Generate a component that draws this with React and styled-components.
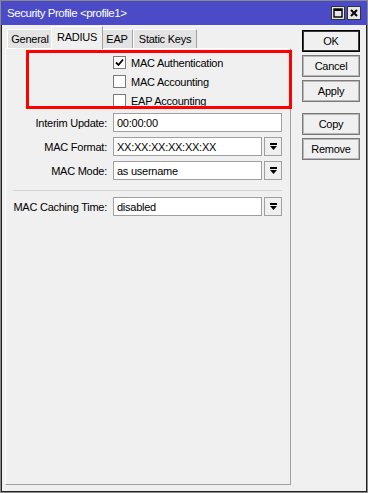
import React from "react";
import styled, { createGlobalStyle } from "styled-components";

const GlobalStyle = createGlobalStyle`
  html, body {
    margin: 0;
    padding: 0;
    background: #f0f0f0;
  }
  body {
    font-family: "Liberation Sans", Arial, sans-serif;
    font-size: 11px;
    letter-spacing: -0.25px;
    color: #000;
  }
  * {
    box-sizing: border-box;
  }
`;

const tabs = [
  { name: "General", width: 46 },
  { name: "RADIUS", width: 52 },
  { name: "EAP", width: 32 },
  { name: "Static Keys", width: 64 },
];

const checks = [
  { label: "MAC Authentication", checked: true },
  { label: "MAC Accounting", checked: false },
  { label: "EAP Accounting", checked: false },
];

function App() {
  return (
    <>
      <GlobalStyle />
      <Window>
        <TitleBar>
          <Title>Security Profile &lt;profile1&gt;</Title>
          <TitleButtons>
            <TitleButton>
              <svg width="10" height="10" viewBox="0 0 10 10">
                <rect x="1" y="1" width="8" height="8" fill="none" stroke="#000" strokeWidth="1.4" />
                <rect x="1" y="1" width="8" height="2" fill="#000" />
              </svg>
            </TitleButton>
            <TitleButton>
              <svg width="10" height="10" viewBox="0 0 10 10">
                <path d="M2 2 L8 8 M8 2 L2 8" stroke="#000" strokeWidth="2" />
              </svg>
            </TitleButton>
          </TitleButtons>
        </TitleBar>

        <Body>
          <TabArea>
            <TabStrip>
              {tabs.map((t) => (
                <Tab key={t.name} $w={t.width} $active={t.name === "RADIUS"}>
                  {t.name}
                </Tab>
              ))}
            </TabStrip>

            <Panel>
              <Highlight />
              <Form>
                {checks.map((c) => (
                  <CheckRow key={c.label}>
                    <CheckBox>
                      {c.checked && (
                        <svg width="9" height="9" viewBox="0 0 9 9">
                          <path d="M1 4.5 L3.5 7 L8 1.5" fill="none" stroke="#000" strokeWidth="1.8" />
                        </svg>
                      )}
                    </CheckBox>
                    <span>{c.label}</span>
                  </CheckRow>
                ))}

                <Label $first>Interim Update:</Label>
                <Control $first>
                  <Input>00:00:00</Input>
                </Control>

                <Label>MAC Format:</Label>
                <Control>
                  <Input>XX:XX:XX:XX:XX:XX</Input>
                  <DropButton>
                    <DropIcon />
                  </DropButton>
                </Control>

                <Label>MAC Mode:</Label>
                <Control>
                  <Input>as username</Input>
                  <DropButton>
                    <DropIcon />
                  </DropButton>
                </Control>

                <Separator />

                <Label>MAC Caching Time:</Label>
                <Control>
                  <Input>disabled</Input>
                  <DropButton>
                    <DropIcon />
                  </DropButton>
                </Control>
              </Form>
            </Panel>
          </TabArea>

          <ButtonColumn>
            <Button $default>OK</Button>
            <Button>Cancel</Button>
            <Button>Apply</Button>
            <Button $spaced>Copy</Button>
            <Button>Remove</Button>
          </ButtonColumn>
        </Body>
      </Window>
    </>
  );
}

function DropIcon() {
  return (
    <svg width="9" height="8" viewBox="0 0 9 8">
      <rect x="1" y="0" width="7" height="2" fill="#000" />
      <polygon points="1,3 8,3 4.5,7" fill="#000" />
    </svg>
  );
}

export default App;

const Window = styled.div`
  width: 368px;
  height: 493px;
  display: flex;
  flex-direction: column;
  border: 1px solid #8a8a8a;
  background: #f0f0f0;
`;

const TitleBar = styled.div`
  height: 24px;
  background: #4b4bc8;
  display: flex;
  align-items: center;
  justify-content: space-between;
  padding: 0 6px 0 6px;
`;

const Title = styled.span`
  color: #fff;
  font-size: 11.5px;
  letter-spacing: -0.45px;
`;

const TitleButtons = styled.div`
  display: flex;
  gap: 2px;
`;

const TitleButton = styled.div`
  width: 14px;
  height: 14px;
  background: #e6e6e6;
  border: 1px solid #333;
  display: flex;
  align-items: center;
  justify-content: center;
`;

const Body = styled.div`
  flex: 1;
  display: flex;
  gap: 11px;
  padding: 1px 6px 6px 3px;
  border: 1px solid #222;
  border-top: none;
`;

const TabArea = styled.div`
  width: 286px;
  display: flex;
  flex-direction: column;
`;

const TabStrip = styled.div`
  height: 22px;
  display: flex;
  align-items: flex-end;
  padding-left: 2px;
  position: relative;
  z-index: 1;
`;

const Tab = styled.div`
  width: ${(p) => p.$w}px;
  height: ${(p) => (p.$active ? 23 : 19)}px;
  margin: ${(p) => (p.$active ? "0 -2px -1px" : "0")};
  padding-bottom: ${(p) => (p.$active ? 3 : 0)}px;
  background: ${(p) => (p.$active ? "#f0f0f0" : "#e3e3e3")};
  border-top: 1px solid #fff;
  border-left: 1px solid #fff;
  border-right: 1px solid #a0a0a0;
  display: flex;
  align-items: center;
  justify-content: center;
  white-space: nowrap;
  position: relative;
  z-index: ${(p) => (p.$active ? 2 : 0)};
`;

const Panel = styled.div`
  flex: 1;
  position: relative;
  border-top: 1px solid #fff;
  border-left: 1px solid #fff;
  border-right: 1px solid #a0a0a0;
  border-bottom: 1px solid #a0a0a0;
`;

const Highlight = styled.div`
  position: absolute;
  left: 20px;
  top: 1px;
  width: 266px;
  height: 59px;
  border: 3px solid #ff0000;
  pointer-events: none;
  z-index: 3;
`;

const Form = styled.div`
  display: grid;
  grid-template-columns: 101px 169px;
  column-gap: 6px;
  padding: 4px 0 0 0;
`;

const CheckRow = styled.div`
  grid-column: 2;
  height: 19px;
  display: flex;
  align-items: center;
  gap: 5px;
`;

const CheckBox = styled.div`
  width: 13px;
  height: 13px;
  background: #fff;
  border: 1px solid #7a7a7a;
  display: flex;
  align-items: center;
  justify-content: center;
`;

const Label = styled.div`
  grid-column: 1;
  height: 19px;
  margin-top: ${(p) => (p.$first ? 3 : 5)}px;
  display: flex;
  align-items: center;
  justify-content: flex-end;
  white-space: nowrap;
`;

const Control = styled.div`
  grid-column: 2;
  height: 19px;
  margin-top: ${(p) => (p.$first ? 3 : 5)}px;
  display: flex;
  gap: 2px;
`;

const Input = styled.div`
  flex: 1;
  height: 19px;
  background: #fff;
  border: 1px solid #a0a0a0;
  padding: 0 3px;
  display: flex;
  align-items: center;
  white-space: nowrap;
`;

const DropButton = styled.div`
  width: 18px;
  height: 19px;
  background: #f0f0f0;
  border: 1px solid #a0a0a0;
  display: flex;
  align-items: center;
  justify-content: center;
`;

const Separator = styled.div`
  grid-column: 1 / 3;
  margin: 10px 0 1px 7px;
  border-top: 1px solid #d6d6d6;
`;

const ButtonColumn = styled.div`
  width: 58px;
  margin-top: 4px;
  display: flex;
  flex-direction: column;
  gap: 3px;
`;

const Button = styled.div`
  height: 22px;
  margin-top: ${(p) => (p.$spaced ? 8 : 0)}px;
  background: #f0f0f0;
  border: 1px solid ${(p) => (p.$default ? "#000" : "#7a7a7a")};
  box-shadow: inset 0 0 0 1px ${(p) => (p.$default ? "#3a3a3a" : "#b8b8b8")};
  display: flex;
  align-items: center;
  justify-content: center;
`;
